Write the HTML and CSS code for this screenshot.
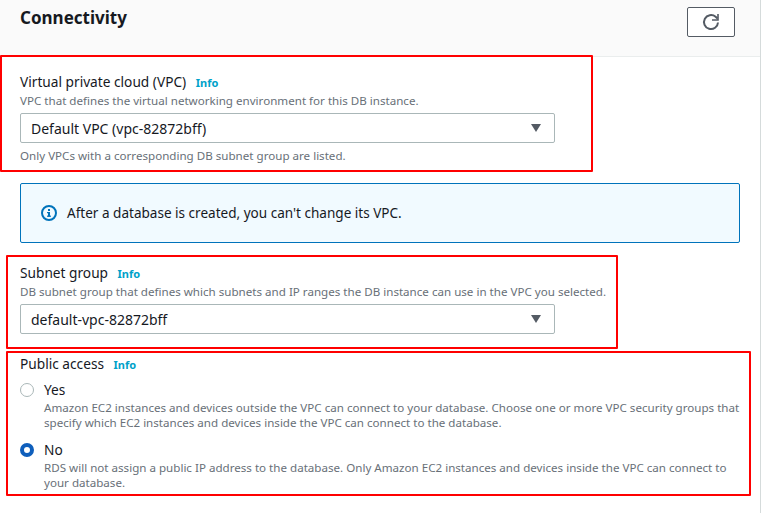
FILE: index.html
```html
<!DOCTYPE html>
<html lang="en">
<head>
    <meta charset="UTF-8">
    <title>Connectivity</title>
    <link rel="stylesheet" href="styles.css">
</head>
<body>
    <div class="card">
        <div class="card-header">
            <h2>Connectivity</h2>
            <button class="refresh-btn" aria-label="Refresh">
                <svg width="18" height="18" viewBox="0 0 18 18" fill="none" stroke="#545b64" stroke-width="2">
                    <path d="M16 9.5A7 7 0 1 1 13.6 3.8L15.5 5.6"/>
                    <path d="M16 1v6h-6" stroke-width="1.6"/>
                </svg>
            </button>
        </div>

        <div class="card-body">
            <div class="field field-vpc">
                <div class="label">Virtual private cloud (VPC) <a class="info">Info</a></div>
                <div class="desc">VPC that defines the virtual networking environment for this DB instance.</div>
                <div class="select">
                    <span>Default VPC (vpc-82872bff)</span>
                    <i class="caret"></i>
                </div>
                <div class="desc hint">Only VPCs with a corresponding DB subnet group are listed.</div>
            </div>

            <div class="alert">
                <svg width="16" height="16" viewBox="0 0 16 16" fill="none">
                    <circle cx="8" cy="8" r="7" stroke="#0073bb" stroke-width="2"/>
                    <rect x="7" y="7" width="2" height="4.6" fill="#0073bb"/>
                    <rect x="6" y="7" width="2" height="1.2" fill="#0073bb"/>
                    <rect x="6" y="10.6" width="4" height="1.2" fill="#0073bb"/>
                    <rect x="7" y="4" width="2" height="2" fill="#0073bb"/>
                </svg>
                <span>After a database is created, you can't change its VPC.</span>
            </div>

            <div class="field field-subnet">
                <div class="label">Subnet group <a class="info">Info</a></div>
                <div class="desc">DB subnet group that defines which subnets and IP ranges the DB instance can use in the VPC you selected.</div>
                <div class="select">
                    <span>default-vpc-82872bff</span>
                    <i class="caret"></i>
                </div>
            </div>

            <div class="field field-access">
                <div class="label">Public access <a class="info">Info</a></div>
                <div class="radio-row">
                    <i class="radio"></i>
                    <div>
                        <div class="radio-title">Yes</div>
                        <div class="desc">Amazon EC2 instances and devices outside the VPC can connect to your database. Choose one or more VPC security groups that specify which EC2 instances and devices inside the VPC can connect to the database.</div>
                    </div>
                </div>
                <div class="radio-row">
                    <i class="radio checked"></i>
                    <div>
                        <div class="radio-title">No</div>
                        <div class="desc">RDS will not assign a public IP address to the database. Only Amazon EC2 instances and devices inside the VPC can connect to your database.</div>
                    </div>
                </div>
            </div>
        </div>
    </div>

    <div class="mark mark-vpc"></div>
    <div class="mark mark-subnet"></div>
    <div class="mark mark-access"></div>
</body>
</html>
```

FILE: styles.css
```css
* {
    margin: 0;
    padding: 0;
    box-sizing: border-box;
}

body {
    position: relative;
    width: 761px;
    height: 513px;
    overflow: hidden;
    background: white;
    font-family: "Noto Sans", sans-serif;
    color: #16191f;
}

.card {
    height: 513px;
    border-right: 1px solid #d5dbdb;
}

.card-header {
    display: flex;
    justify-content: space-between;
    height: 57px;
    padding: 7px 25px 0 20px;
    background: #fafafa;
    border-bottom: 1px solid #eaeded;
}

.card-header h2 {
    font-size: 17px;
    line-height: 22px;
    font-weight: 700;
}

.refresh-btn {
    display: flex;
    align-items: center;
    justify-content: center;
    width: 48px;
    height: 30px;
    background: white;
    border: 1px solid #545b64;
    border-radius: 2px;
}

.card-body {
    padding: 16px 20px 0 20px;
}

.label {
    font-size: 13.7px;
    line-height: 18px;
}

.info {
    margin-left: 6px;
    font-size: 11px;
    font-weight: 700;
    color: #00a1c9;
}

.desc {
    font-size: 11.6px;
    line-height: 15px;
    color: #687078;
}

.label + .desc,
.radio-title + .desc {
    margin-top: 1px;
}

.select {
    display: flex;
    align-items: center;
    justify-content: space-between;
    width: 535px;
    height: 30px;
    margin-top: 5px;
    padding: 0 13px 0 10px;
    border: 1px solid #aab7b8;
    border-radius: 2px;
    font-size: 14px;
}

.caret {
    width: 0;
    height: 0;
    border-left: 5.5px solid transparent;
    border-right: 5.5px solid transparent;
    border-top: 8px solid #545b64;
}

.hint {
    margin-top: 5px;
}

.alert {
    display: flex;
    align-items: center;
    gap: 10px;
    height: 60px;
    margin-top: 20px;
    padding-left: 20px;
    background: #f1faff;
    border: 1px solid #0073bb;
    border-radius: 2px;
    font-size: 13.55px;
}

.field-subnet {
    margin-top: 21px;
}

.field-access {
    margin-top: 21px;
    margin-right: -6px;
}

.radio-row {
    display: flex;
    gap: 10px;
    margin-top: 6px;
}

.radio-row + .radio-row {
    margin-top: 10px;
}

.radio {
    flex: none;
    width: 14px;
    height: 14px;
    margin-top: 3px;
    border: 1px solid #aab7b8;
    border-radius: 50%;
}

.radio.checked {
    border: 4px solid #0f5fbc;
}

.radio-title {
    font-size: 13.7px;
    line-height: 19px;
}

.mark {
    position: absolute;
    border: 2px solid #f00;
    border-radius: 1px;
}

.mark-vpc {
    left: 0;
    top: 55px;
    width: 593px;
    height: 117px;
}

.mark-subnet {
    left: 6px;
    top: 255px;
    width: 612px;
    height: 94px;
}

.mark-access {
    left: 6px;
    top: 351px;
    width: 745px;
    height: 145px;
}
```
